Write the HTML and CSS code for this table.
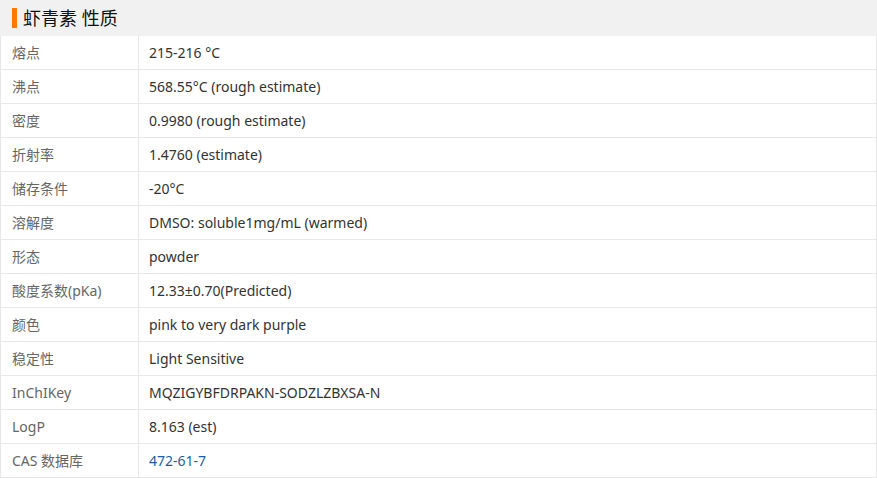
FILE: index.html
```html
<!DOCTYPE html>
<html lang="zh">
<head>
<meta charset="utf-8">
<link rel="stylesheet" href="styles.css">
</head>
<body>
<div class="panel">
  <div class="head"><span class="bar"></span><h2 class="title">虾青素 性质</h2></div>
  <table class="props">
    <tr><td class="k">熔点</td><td class="v">215-216 °C</td></tr>
    <tr><td class="k">沸点</td><td class="v">568.55°C (rough estimate)</td></tr>
    <tr><td class="k">密度</td><td class="v">0.9980 (rough estimate)</td></tr>
    <tr><td class="k">折射率</td><td class="v">1.4760 (estimate)</td></tr>
    <tr><td class="k">储存条件</td><td class="v">-20°C</td></tr>
    <tr><td class="k">溶解度</td><td class="v">DMSO: soluble1mg/mL (warmed)</td></tr>
    <tr><td class="k">形态</td><td class="v">powder</td></tr>
    <tr><td class="k">酸度系数(pKa)</td><td class="v">12.33±0.70(Predicted)</td></tr>
    <tr><td class="k">颜色</td><td class="v">pink to very dark purple</td></tr>
    <tr><td class="k">稳定性</td><td class="v">Light Sensitive</td></tr>
    <tr><td class="k">InChIKey</td><td class="v">MQZIGYBFDRPAKN-SODZLZBXSA-N</td></tr>
    <tr><td class="k">LogP</td><td class="v">8.163 (est)</td></tr>
    <tr><td class="k">CAS 数据库</td><td class="v"><a class="link" href="#">472-61-7</a></td></tr>
  </table>
</div>
</body>
</html>
```
FILE: styles.css
```css
html, body {
  margin: 0;
  padding: 0;
  background: #fff;
}
body {
  font-family: "Noto Sans", "Noto Sans CJK SC", sans-serif;
  font-size: 14px;
  color: #333;
}
.panel {
  width: 877px;
}
.head {
  height: 36px;
  background: #f1f1f1;
  display: flex;
  align-items: center;
  padding-left: 12px;
  box-sizing: border-box;
}
.bar {
  width: 5px;
  height: 20px;
  background: #ff7800;
  margin-right: 6px;
}
.title {
  margin: 0;
  font-size: 18px;
  font-weight: normal;
  color: #111;
  line-height: 1;
}
.props {
  width: 877px;
  border-collapse: collapse;
  border-left: 1px solid #e8e8e8;
  border-right: 1px solid #e8e8e8;
}
.props td {
  height: 33px;
  padding: 0;
  border-bottom: 1px solid #e8e8e8;
  vertical-align: middle;
  line-height: 20px;
}
.k {
  width: 126px;
  padding-left: 11px !important;
  border-right: 1px solid #e8e8e8;
  color: #666;
}
.v {
  padding-left: 10px !important;
  color: #333;
}
.link {
  color: #1a5ea8;
  text-decoration: none;
}
```
